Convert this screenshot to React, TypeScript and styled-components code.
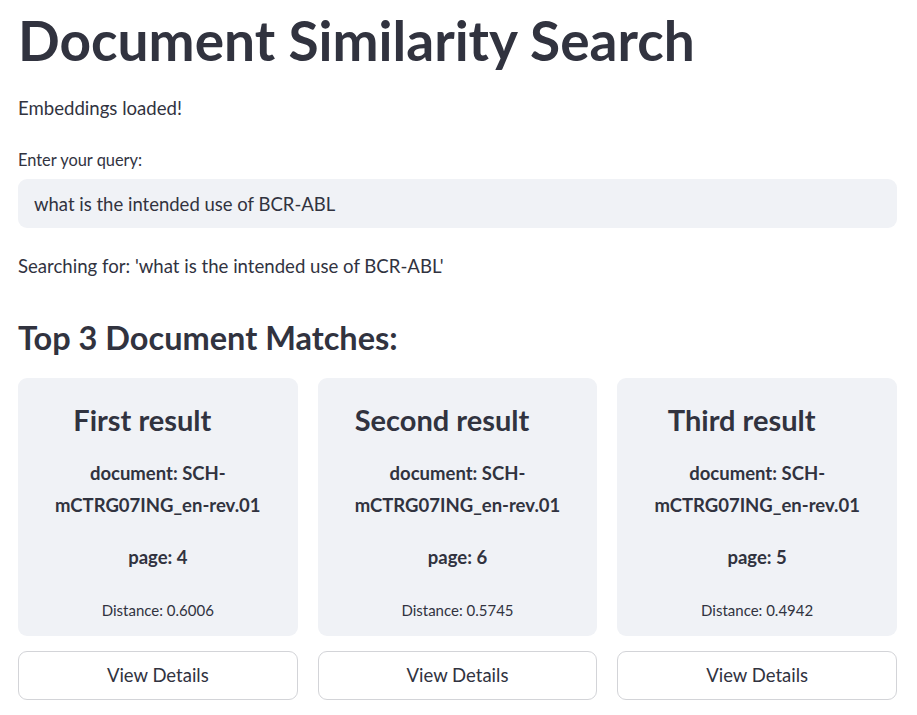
import styled, { createGlobalStyle } from "styled-components";

const GlobalStyle = createGlobalStyle`
  body {
    margin: 0;
    background: #ffffff;
    color: #31333f;
    font-family: "Lato", "Noto Sans", sans-serif;
  }
`;

const results = [
  { title: "First result", doc: "SCH-mCTRG07ING_en-rev.01", page: 4, distance: "0.6006" },
  { title: "Second result", doc: "SCH-mCTRG07ING_en-rev.01", page: 6, distance: "0.5745" },
  { title: "Third result", doc: "SCH-mCTRG07ING_en-rev.01", page: 5, distance: "0.4942" },
];

export default function App() {
  const query = "what is the intended use of BCR-ABL";

  return (
    <>
      <GlobalStyle />
      <Main>
        <Title>Document Similarity Search</Title>
        <Text>Embeddings loaded!</Text>
        <Label>Enter your query:</Label>
        <QueryInput defaultValue={query} />
        <Text $top={23}>Searching for: '{query}'</Text>
        <Heading>Top 3 Document Matches:</Heading>
        <Columns>
          {results.map((r) => (
            <Column key={r.title}>
              <Card>
                <CardTitle>{r.title}</CardTitle>
                <CardLine $top={15}>
                  document: SCH-
                  <br />
                  mCTRG07ING_en-rev.01
                </CardLine>
                <CardLine $top={20}>page: {r.page}</CardLine>
                <Distance>Distance: {r.distance}</Distance>
              </Card>
              <Button>View Details</Button>
            </Column>
          ))}
        </Columns>
      </Main>
    </>
  );
}

const Main = styled.main`
  padding: 0 20px 16px 18px;
`;

const Title = styled.h1`
  margin: 0;
  padding-top: 6px;
  font-size: 55px;
  line-height: 68px;
  font-weight: 700;
`;

const Text = styled.p<{ $top?: number }>`
  margin: ${(p) => p.$top ?? 19}px 0 0;
  font-size: 18.6px;
  line-height: 30px;
`;

const Label = styled.label`
  display: block;
  margin-top: 25px;
  font-size: 16.4px;
  line-height: 24px;
`;

const QueryInput = styled.input`
  display: block;
  box-sizing: border-box;
  width: 100%;
  height: 49px;
  margin-top: 7px;
  padding: 0 16px;
  border: none;
  border-radius: 9px;
  background: #f0f2f6;
  color: #31333f;
  font-family: inherit;
  font-size: 18.5px;
  outline: none;
`;

const Heading = styled.h2`
  margin: 33px 0 0;
  font-size: 32.5px;
  line-height: 48px;
  font-weight: 700;
`;

const Columns = styled.div`
  display: grid;
  grid-template-columns: repeat(3, 1fr);
  gap: 20px;
  margin-top: 16px;
`;

const Column = styled.div`
  display: flex;
  flex-direction: column;
  gap: 15px;
`;

const Card = styled.div`
  display: flex;
  flex-direction: column;
  align-items: center;
  height: 258px;
  box-sizing: border-box;
  padding-top: 20px;
  border-radius: 9px;
  background: #f0f2f6;
  text-align: center;
`;

const CardTitle = styled.h3`
  margin: 0;
  padding-right: 31px;
  font-size: 29px;
  line-height: 44px;
  font-weight: 700;
`;

const CardLine = styled.p<{ $top: number }>`
  margin: ${(p) => p.$top}px 0 0;
  font-size: 18.5px;
  line-height: 32px;
  font-weight: 700;
`;

const Distance = styled.p`
  margin: 25px 0 0;
  font-size: 15px;
  line-height: 24px;
`;

const Button = styled.button`
  height: 49px;
  border: 1px solid #d3d4d8;
  border-radius: 9px;
  background: #ffffff;
  color: #31333f;
  font-family: inherit;
  font-size: 18.5px;
  padding-bottom: 2px;
`;
